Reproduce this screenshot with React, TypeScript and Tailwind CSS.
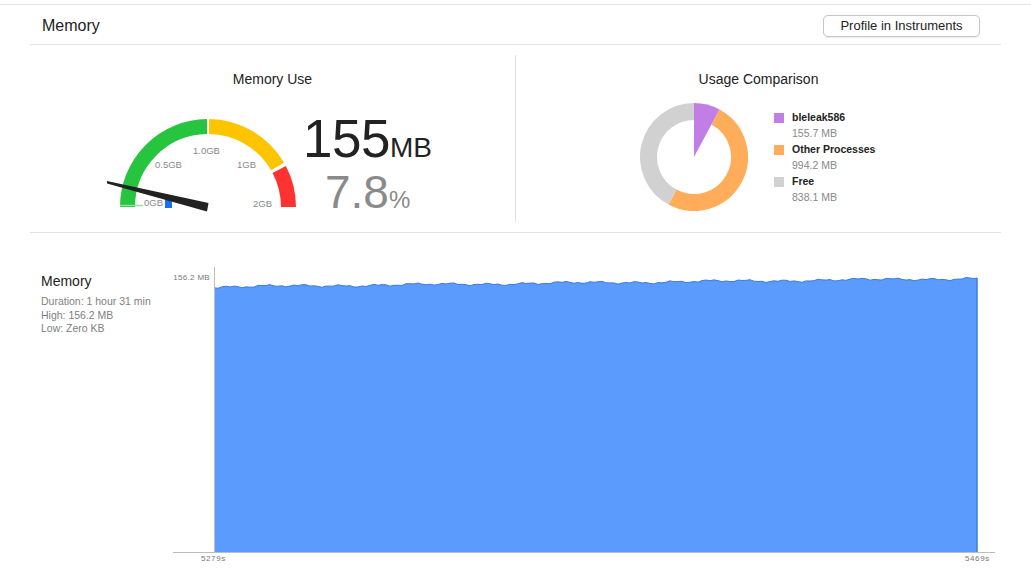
import React from "react"

const FONT = { fontFamily: '"Liberation Sans", Arial, sans-serif' }

// gauge geometry (svg local coords)
const GC = { x: 108, y: 96 }
const GR = 80.5

function arc(cx: number, cy: number, r: number, a0: number, a1: number) {
  // angles in degrees, 0 = right, counter-clockwise (screen up)
  const p = (a: number) => [cx + r * Math.cos((a * Math.PI) / 180), cy - r * Math.sin((a * Math.PI) / 180)]
  const [x0, y0] = p(a0)
  const [x1, y1] = p(a1)
  const large = Math.abs(a0 - a1) > 180 ? 1 : 0
  const sweep = a0 > a1 ? 1 : 0
  return `M${x0.toFixed(2)} ${y0.toFixed(2)} A${r} ${r} 0 ${large} ${sweep} ${x1.toFixed(2)} ${y1.toFixed(2)}`
}

function Gauge() {
  return (
    <svg width="200" height="104" viewBox="0 0 200 104" className="shrink-0">
      <path d={arc(GC.x, GC.y, GR, 180, 90.7)} stroke="#27c43f" strokeWidth="15" fill="none" />
      <path d={arc(GC.x, GC.y, GR, 89.3, 30.2)} stroke="#fec400" strokeWidth="15" fill="none" />
      <path d={arc(GC.x, GC.y, GR, 27.8, 0)} stroke="#fe3230" strokeWidth="15" fill="none" />
      <line x1="20" y1="94.5" x2="43" y2="94.5" stroke="#8fe09c" strokeWidth="1.5" />
      <g fontSize="9.5" fill="#8a8a8a" style={FONT}>
        <text x="44" y="95">0GB</text>
        <text x="55" y="57">0.5GB</text>
        <text x="93" y="43">1.0GB</text>
        <text x="137" y="57">1GB</text>
        <text x="153" y="96">2GB</text>
      </g>
      <rect x="65" y="88" width="7" height="9" fill="#1a6ef5" />
      <polygon points="7,70 7,72.5 107,100.5 108.5,92" fill="#222" />
    </svg>
  )
}

function Donut() {
  const c = 54
  const total = 155.7 + 994.2 + 838.1
  const aP = (155.7 / total) * 360
  const aO = aP + (994.2 / total) * 360
  // clockwise from top
  const pt = (r: number, a: number) => [c + r * Math.sin((a * Math.PI) / 180), c - r * Math.cos((a * Math.PI) / 180)]
  const [px, py] = pt(54, aP)
  return (
    <svg width="108" height="108" viewBox="0 0 108 108" className="shrink-0">
      <path d={arc(c, c, 45.5, 90 - aP, 90 - aO)} stroke="#ffad5b" strokeWidth="17" fill="none" />
      <path d={arc(c, c, 45.5, 90 - aO, -270)} stroke="#d1d1d1" strokeWidth="17" fill="none" />
      <path d={`M${c} ${c} L${c} 0 A54 54 0 0 1 ${px.toFixed(2)} ${py.toFixed(2)} Z`} fill="#c17fe5" />
    </svg>
  )
}

function LegendItem({ color, name, value }: { color: string; name: string; value: string }) {
  return (
    <div className="flex flex-col">
      <div className="flex items-center gap-2 h-[15px]">
        <div className="w-[10px] h-[10px]" style={{ backgroundColor: color }} />
        <span className="text-[10.5px] font-bold text-[#222]">{name}</span>
      </div>
      <span className="pl-[18px] text-[10.5px] text-[#888] leading-[17px]">{value}</span>
    </div>
  )
}

function buildWave() {
  const x0 = 44
  const x1 = 807
  const pts: string[] = []
  for (let x = x0; x <= x1 + 3; x += 4) {
    const xx = Math.min(x, x1)
    const t = (xx - x0) / (x1 - x0)
    const base = 25 - t * 8.5
    const w = Math.sin(xx * 0.55) * 0.6 + Math.sin(xx * 0.17 + 1) * 0.8 + Math.sin(xx * 0.043) * 0.6
    pts.push(`${xx} ${(base + w).toFixed(2)}`)
  }
  return pts
}

function Chart() {
  const pts = buildWave()
  const top = "M" + pts.join(" L")
  const fill = `${top} L807 290 L44 290 Z`
  return (
    <svg width="830" height="303" viewBox="0 0 830 303" className="shrink-0">
      <path d={fill} fill="#5a9bfd" />
      <path d={top} stroke="#3a7be3" strokeWidth="1" fill="none" />
      <line x1="807" y1={pts[pts.length - 1].split(" ")[1]} x2="807" y2="290" stroke="#3a7be3" strokeWidth="1.5" />
      <line x1="44.5" y1="5" x2="44.5" y2="290" stroke="#bdbdbd" strokeWidth="1" />
      <line x1="3" y1="290.5" x2="825" y2="290.5" stroke="#bdbdbd" strokeWidth="1" />
      <g fontSize="8" fill="#777" style={FONT} letterSpacing="0.6">
        <text x="40" y="18" textAnchor="end" letterSpacing="0.3">156.2 MB</text>
        <text x="31" y="299">5279s</text>
        <text x="795" y="299">5469s</text>
      </g>
    </svg>
  )
}

export default function App() {
  return (
    <div className="w-[1031px] h-[585px] bg-white overflow-hidden text-[#222]" style={FONT}>
      <div className="h-[4px]" />
      <div className="h-px bg-[#e3e3e3]" />
      <div className="mx-[30px]">
        <div className="flex items-center justify-between h-[40px] border-b border-[#e3e3e3] pl-3 pr-[21px]">
          <span className="text-[16px] text-[#222] mt-[2px]">Memory</span>
          <button className="h-[22px] w-[157px] mt-[2px] rounded-[5px] border border-[#c6c6c6] bg-white text-[13px] text-[#222] shadow-[0_0.5px_1px_rgba(0,0,0,0.08)]">
            Profile in Instruments
          </button>
        </div>

        <div className="flex h-[188px] border-b border-[#e3e3e3]">
          <div className="flex-1 flex flex-col">
            <div className="pt-[26px] text-center text-[14px] leading-[16px]">Memory Use</div>
            <div className="flex pl-[70px] pt-[24px]">
              <Gauge />
              <div className="flex flex-col pl-[3px]">
                <div className="flex items-baseline">
                  <span className="text-[53px] leading-[56px] text-[#222] tracking-[-0.5px]">155</span>
                  <span className="text-[28px] text-[#222]">MB</span>
                </div>
                <div className="flex items-baseline pl-[22px] -mt-[2px]">
                  <span className="text-[46px] leading-[50px] text-[#8a8a8a]">7.8</span>
                  <span className="text-[24px] text-[#8a8a8a]">%</span>
                </div>
              </div>
            </div>
          </div>
          <div className="w-px bg-[#e3e3e3] my-[10px]" />
          <div className="flex-1 flex flex-col">
            <div className="pt-[26px] text-center text-[14px] leading-[16px]">Usage Comparison</div>
            <div className="flex pl-[124px] pt-[16px] gap-[26px]">
              <Donut />
              <div className="flex flex-col pt-[7px]">
                <LegendItem color="#c17fe5" name="bleleak586" value="155.7 MB" />
                <LegendItem color="#ffad5b" name="Other Processes" value="994.2 MB" />
                <LegendItem color="#d1d1d1" name="Free" value="838.1 MB" />
              </div>
            </div>
          </div>
        </div>

        <div className="flex">
          <div className="w-[140px] pl-[11px] pt-[40px]">
            <div className="text-[14px] leading-[16px] text-[#222]">Memory</div>
            <div className="mt-[6px] text-[10.5px] leading-[13.5px] text-[#808080]">
              <div>Duration: 1 hour 31 min</div>
              <div>High: 156.2 MB</div>
              <div>Low: Zero KB</div>
            </div>
          </div>
          <div className="pt-[29px]">
            <Chart />
          </div>
        </div>
      </div>
    </div>
  )
}
